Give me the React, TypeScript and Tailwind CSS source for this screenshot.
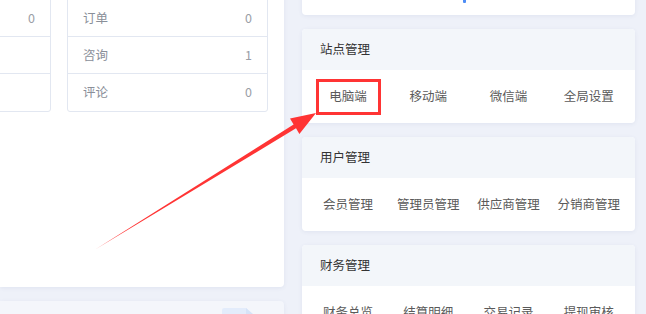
import React from "react";

const font = { fontFamily: '"Noto Sans CJK SC", "Noto Sans", sans-serif' };

function Table({ rows }: { rows: { label: string; value: string }[] }) {
  return (
    <div className="w-[201px] shrink-0 border border-[#e2e7f1] rounded-b-[3px]">
      {rows.map((r, i) => (
        <div
          key={i}
          className={`h-[37px] flex items-center justify-between px-[15px] text-[12.5px] ${
            i < rows.length - 1 ? "border-b border-[#e2e7f1]" : ""
          }`}
        >
          <span className="text-[#8a8f99]">{r.label}</span>
          <span className="text-[#9a9ea6]">{r.value}</span>
        </div>
      ))}
    </div>
  );
}

function Section({ title, items }: { title: string; items: string[] }) {
  return (
    <div className="bg-white rounded-[4px] shadow-[0_1px_4px_rgba(60,80,140,0.08)] overflow-hidden shrink-0">
      <div className="h-[41px] bg-[#f3f6fa] flex items-center px-[18px] text-[12.5px] text-[#333]">
        {title}
      </div>
      <div className="h-[53px] grid grid-cols-4 px-[6px] items-center">
        {items.map((it) => (
          <div key={it} className="text-center text-[12.5px] text-[#5a5a5a]">
            {it}
          </div>
        ))}
      </div>
    </div>
  );
}

export default function App() {
  return (
    <div
      className="relative w-[646px] h-[314px] overflow-hidden bg-[#eef1f9]"
      style={font}
    >
      <div className="flex">
        {/* left column */}
        <div className="w-[284px] shrink-0 flex flex-col gap-[14px]">
          <div className="-mt-[20px] h-[307px] bg-white rounded-br-[4px] shadow-[0_1px_4px_rgba(60,80,140,0.08)] overflow-hidden pt-[19px]">
            <div className="flex justify-end gap-[16px] pr-[16px]">
              <Table
                rows={[
                  { label: "", value: "0" },
                  { label: "", value: "" },
                  { label: "", value: "" },
                ]}
              />
              <Table
                rows={[
                  { label: "订单", value: "0" },
                  { label: "咨询", value: "1" },
                  { label: "评论", value: "0" },
                ]}
              />
            </div>
          </div>
          <div className="h-[40px] bg-[#f4f6fb] rounded-tr-[4px] shadow-[0_1px_4px_rgba(60,80,140,0.08)] flex justify-end pr-[28px] pt-[5px]">
            <svg width="36" height="30" viewBox="0 0 36 30">
              <path d="M2 4 Q2 2 4 2 H26 L34 9 V30 H2 Z" fill="#e3ecfb" />
              <path d="M26 2 V9 H34" fill="#d6e3f8" />
            </svg>
          </div>
        </div>

        {/* right column */}
        <div className="ml-[18px] w-[333px] shrink-0 flex flex-col gap-[14px]">
          <div className="-mt-[45px] h-[60px] bg-white rounded-b-[4px] shadow-[0_1px_4px_rgba(60,80,140,0.08)] flex flex-col justify-end pb-[12px]">
            <div className="ml-[161px] w-[3px] h-[10px] bg-[#4d8cf5] rounded-[1px]" />
          </div>
          <Section title="站点管理" items={["电脑端", "移动端", "微信端", "全局设置"]} />
          <Section title="用户管理" items={["会员管理", "管理员管理", "供应商管理", "分销商管理"]} />
          <Section title="财务管理" items={["财务总览", "结算明细", "交易记录", "提现审核"]} />
        </div>
      </div>

      {/* annotation overlay */}
      <div className="absolute left-[316px] top-[79px] w-[65px] h-[36px] border-[3px] border-[#ff3434]" />
      <svg className="absolute left-0 top-0" width="646" height="314" viewBox="0 0 646 314">
        <path
          d="M96 249 L293.6 124.6 L290 118.5 L316 113 L299.4 133.9 L296 128.3 Z"
          fill="#ff3434"
        />
      </svg>
    </div>
  );
}
